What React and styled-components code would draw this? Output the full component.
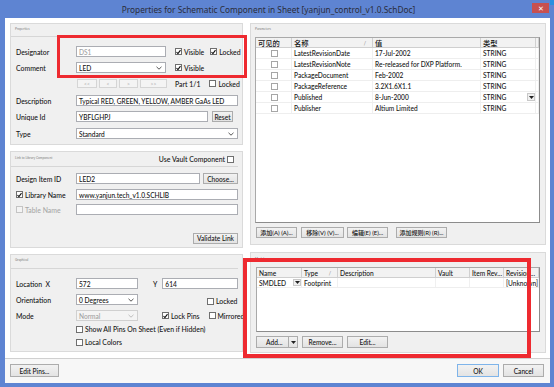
import React from "react";
import styled, { createGlobalStyle } from "styled-components";

const FONT = `Lato, "Noto Sans", "Noto Sans CJK SC", sans-serif`;

const Global = createGlobalStyle`
  html, body { margin: 0; padding: 0; }
  body {
    width: 554px; height: 387px; overflow: hidden;
    font-family: ${FONT};
    font-weight: 500;
    color: #141414;
  }
  * { box-sizing: border-box; }
`;

const Frame = styled.div`
  position: relative;
  width: 554px;
  height: 387px;
  background: #5e84d2;
  display: flex;
  flex-direction: column;
  padding: 0 4px 4px 5px;
`;

const TitleBar = styled.div`
  height: 18px;
  display: flex;
  align-items: center;
  justify-content: center;
  position: relative;
  font-family: "Noto Sans", sans-serif;
  font-weight: 400;
  font-size: 8.3px;
  color: #2a2d3a;
  padding-right: 18px;
`;

const CloseBtn = styled.div`
  position: absolute;
  right: 1px;
  top: 3px;
  width: 17px;
  height: 10px;
  background: #c75050;
  color: #fff;
  font-size: 7px;
  display: flex;
  align-items: center;
  justify-content: center;
`;

const CornerMark = styled.div`
  position: absolute;
  right: -4px;
  top: 0;
  width: 4px;
  height: 5px;
  background: #2a8fe0;
`;

const Client = styled.div`
  flex: 1;
  background: #fff;
  display: flex;
  flex-direction: column;
`;

const Main = styled.div`
  display: flex;
  gap: 7px;
  padding: 5px 7px 0 5px;
`;

const Column = styled.div`
  display: flex;
  flex-direction: column;
  gap: ${(p) => p.$gap}px;
  width: ${(p) => (p.$w ? `${p.$w}px` : "auto")};
  flex: ${(p) => (p.$w ? "none" : 1)};
`;

const Panel = styled.div`
  height: ${(p) => p.$h}px;
  background: #f0f0f0;
  border: 1px solid #dadada;
  display: flex;
  flex-direction: column;
`;

const PanelHead = styled.div`
  height: ${(p) => p.$h || 12}px;
  display: flex;
  align-items: center;
  justify-content: space-between;
  padding: 0 4px 0 4px;
  margin: 0 4px 0 0;
  border-bottom: ${(p) => (p.$line ? "1px solid #d6d6d6" : "none")};
`;

const Tiny = styled.span`
  font-size: 3.2px;
  color: #8a8a8a;
  align-self: flex-start;
  margin-top: ${(p) => p.$mt || 3}px;
`;

const Body = styled.div`
  padding: 0 4px 0 5px;
  display: flex;
  flex-direction: column;
`;

const Row = styled.div`
  display: flex;
  align-items: center;
  height: ${(p) => p.$h || 11}px;
  margin-top: ${(p) => p.$mt || 0}px;
`;

const Label = styled.div`
  width: ${(p) => p.$w || 60}px;
  flex: none;
  font-size: 6.9px;
  color: ${(p) => (p.$dim ? "#a8a8a8" : "#141414")};
  display: flex;
  align-items: center;
  white-space: nowrap;
`;

const Field = styled.div`
  width: ${(p) => p.$w}px;
  height: 11px;
  flex: none;
  margin-left: ${(p) => p.$ml || 0}px;
  border: 1px solid ${(p) => (p.$dis ? "#d0d0d0" : "#abadb3")};
  background: ${(p) => (p.$dis ? "#f4f4f4" : "#fff")};
  font-size: 6.6px;
  color: ${(p) => (p.$dim ? "#a0a0a0" : "#141414")};
  padding: 0 3px 0 2px;
  display: flex;
  align-items: center;
  justify-content: space-between;
  white-space: nowrap;
  overflow: hidden;
`;

const Chevron = ({ dim }) => (
  <svg width="6" height="4" viewBox="0 0 6 4">
    <polyline points="0.5,0.8 3,3.2 5.5,0.8" fill="none" stroke={dim ? "#b8b8b8" : "#444"} strokeWidth="0.9" />
  </svg>
);

const Btn = styled.div`
  width: ${(p) => p.$w}px;
  height: ${(p) => p.$h || 11}px;
  flex: none;
  margin-left: ${(p) => p.$ml || 0}px;
  border: 1px solid ${(p) => (p.$def ? "#7eb4ea" : p.$dis ? "#d5d5d5" : "#acacac")};
  background: ${(p) => (p.$dis ? "#f4f4f4" : "linear-gradient(#f2f2f2, #e3e3e3)")};
  color: ${(p) => (p.$dis ? "#b0b0b0" : "#141414")};
  font-size: ${(p) => p.$fs || 6.6}px;
  display: flex;
  align-items: center;
  justify-content: center;
  white-space: nowrap;
`;

const SplitBtn = styled(Btn)`
  justify-content: flex-start;
  padding-left: 9px;
  position: relative;
`;

const SplitPart = styled.div`
  position: absolute;
  right: 0;
  top: 0;
  bottom: 0;
  width: 9px;
  border-left: 1px solid #acacac;
  display: flex;
  align-items: center;
  justify-content: center;
`;

const Box = styled.span`
  width: 7px;
  height: 7px;
  flex: none;
  border: 1px solid ${(p) => (p.$dis ? "#c4c4c4" : p.$light ? "#a6a6a6" : "#6f6f6f")};
  background: ${(p) => (p.$dis ? "#f4f4f4" : "#fff")};
  display: inline-flex;
  align-items: center;
  justify-content: center;
`;

const CheckWrap = styled.div`
  display: flex;
  align-items: center;
  gap: 2px;
  margin-left: ${(p) => p.$ml || 0}px;
  font-size: 6.9px;
  color: ${(p) => (p.$dim ? "#a8a8a8" : "#141414")};
  white-space: nowrap;
  align-self: ${(p) => p.$self || "auto"};
`;

const Check = ({ checked, dis, children, ml, self, dim }) => (
  <CheckWrap $ml={ml} $self={self} $dim={dim}>
    <Box $dis={dis}>
      {checked && (
        <svg width="6" height="6" viewBox="0 0 6 6">
          <polyline points="0.6,3 2.3,4.9 5.4,0.7" fill="none" stroke="#111" strokeWidth="1.3" />
        </svg>
      )}
    </Box>
    {children}
  </CheckWrap>
);

const Text = styled.span`
  font-size: 6.9px;
  margin-left: ${(p) => p.$ml || 0}px;
  white-space: nowrap;
`;

const Spacer = styled.div`
  flex: 1;
`;

/* Tables */
const Table = styled.div`
  margin: ${(p) => p.$m};
  height: ${(p) => p.$h}px;
  background: #fff;
  border: 1px solid #a9a9a9;
  border-right-color: #8c8c8c;
  border-bottom-color: #8c8c8c;
  display: flex;
  flex-direction: column;
  overflow: hidden;
`;

const TRow = styled.div`
  display: grid;
  grid-template-columns: ${(p) => p.$cols};
  height: ${(p) => p.$h || 11}px;
  flex: none;
  background: ${(p) => (p.$head ? "#f2f2f2" : "#fff")};
  border-bottom: 1px solid ${(p) => (p.$head ? "#cfcfcf" : "#eeeeee")};
`;

const Cell = styled.div`
  font-size: ${(p) => p.$fs || 6.6}px;
  padding-left: 2px;
  display: flex;
  align-items: center;
  justify-content: ${(p) => p.$jc || "flex-start"};
  border-right: 1px solid ${(p) => (p.$head ? "#d0d0d0" : "#f0f0f0")};
  white-space: nowrap;
  overflow: hidden;
  position: relative;
`;

const SortMark = styled.span`
  position: absolute;
  right: 6px;
  font-size: 5px;
  color: #888;
`;

const DropBtn = styled.div`
  position: absolute;
  right: 0;
  top: 1px;
  bottom: 1px;
  width: 8px;
  background: #f0f0f0;
  border: 1px solid #c8c8c8;
  display: flex;
  align-items: center;
  justify-content: center;
`;

const Tri = () => (
  <svg width="5" height="3" viewBox="0 0 5 3">
    <polygon points="0,0 5,0 2.5,3" fill="#222" />
  </svg>
);

const BtnRow = styled.div`
  display: flex;
  align-items: center;
  margin: ${(p) => p.$m};
`;

const BottomBar = styled.div`
  margin-top: auto;
  height: 25px;
  border-top: 1px solid #d0d0d0;
  background: #f7f7f7;
  display: flex;
  align-items: flex-start;
  padding: 5px 6px 0 5px;
`;

const Annot = styled.div`
  position: absolute;
  left: ${(p) => p.$x}px;
  top: ${(p) => p.$y}px;
  width: ${(p) => p.$w}px;
  height: ${(p) => p.$h}px;
  border: ${(p) => p.$t}px solid #ee2a30;
  pointer-events: none;
`;

const paramCols = "36px 81px 108px 55px 1fr";
const params = [
  ["LatestRevisionDate", "17-Jul-2002", "STRING"],
  ["LatestRevisionNote", "Re-released for DXP Platform.", "STRING"],
  ["PackageDocument", "Feb-2002", "STRING"],
  ["PackageReference", "3.2X1.6X1.1", "STRING"],
  ["Published", "8-Jun-2000", "STRING", true],
  ["Publisher", "Altium Limited", "STRING"],
];

const modelCols = "45px 36px 98px 34px 34px 1fr";

export default function App() {
  return (
    <>
      <Global />
      <Frame>
        <TitleBar>
          Properties for Schematic Component in Sheet [yanjun_control_v1.0.SchDoc]
          <CloseBtn>✕</CloseBtn>
          <CornerMark />
        </TitleBar>
        <Client>
          <Main>
            <Column $w={233} $gap={6}>
              <Panel $h={122}>
                <PanelHead $h={13} $line>
                  <Tiny>Properties</Tiny>
                </PanelHead>
                <Body>
                  <Row $mt={9}>
                    <Label>Designator</Label>
                    <Field $w={90} $dim>DS1</Field>
                    <Check checked ml={9}>Visible</Check>
                    <Check checked ml={6}>Locked</Check>
                  </Row>
                  <Row $mt={5}>
                    <Label>Comment</Label>
                    <Field $w={90}>
                      LED
                      <Chevron />
                    </Field>
                    <Check checked ml={9}>Visible</Check>
                  </Row>
                  <Row $mt={6} $h={9}>
                    <Label />
                    <Btn $w={20} $h={9} $dis $fs={5} $ml={1}>&lt;&lt;</Btn>
                    <Btn $w={18} $h={9} $dis $fs={5} $ml={2}>&lt;</Btn>
                    <Btn $w={19} $h={9} $dis $fs={5} $ml={2}>&gt;</Btn>
                    <Btn $w={27} $h={9} $dis $fs={5} $ml={2}>&gt;&gt;</Btn>
                    <Text $ml={8}>Part 1/1</Text>
                    <Check ml={9}>Locked</Check>
                  </Row>
                  <Row $mt={7}>
                    <Label>Description</Label>
                    <Field $w={162}>Typical RED, GREEN, YELLOW, AMBER GaAs LED</Field>
                  </Row>
                  <Row $mt={5}>
                    <Label>Unique Id</Label>
                    <Field $w={132}>YBFLGHPJ</Field>
                    <Btn $w={21} $ml={4}>Reset</Btn>
                  </Row>
                  <Row $mt={6}>
                    <Label>Type</Label>
                    <Field $w={162}>
                      Standard
                      <Chevron />
                    </Field>
                  </Row>
                </Body>
              </Panel>

              <Panel $h={97}>
                <PanelHead $h={15} $line>
                  <Tiny $mt={4}>Link to Library Component</Tiny>
                  <CheckWrap>
                    Use Vault Component
                    <Box />
                  </CheckWrap>
                </PanelHead>
                <Body>
                  <Row $mt={6}>
                    <Label>Design Item ID</Label>
                    <Field $w={124}>LED2</Field>
                    <Btn $w={35} $ml={3}>Choose...</Btn>
                  </Row>
                  <Row $mt={5}>
                    <Label>
                      <Check checked>Library Name</Check>
                    </Label>
                    <Field $w={162}>www.yanjun.tech_v1.0.SCHLIB</Field>
                  </Row>
                  <Row $mt={4}>
                    <Label>
                      <Check dis dim>Table Name</Check>
                    </Label>
                    <Field $w={162} />
                  </Row>
                  <Row $mt={18} $h={10}>
                    <Spacer />
                    <Btn $w={45} $h={11}>Validate Link</Btn>
                  </Row>
                </Body>
              </Panel>

              <Panel $h={98}>
                <PanelHead $h={14} $line>
                  <Tiny>Graphical</Tiny>
                </PanelHead>
                <Body>
                  <Row $mt={9}>
                    <Label>Location&nbsp;&nbsp;X</Label>
                    <Field $w={62}>572</Field>
                    <Text $ml={15}>Y</Text>
                    <Field $w={76} $ml={5}>614</Field>
                  </Row>
                  <Row $mt={5}>
                    <Label>Orientation</Label>
                    <Field $w={62}>
                      0 Degrees
                      <Chevron />
                    </Field>
                    <Check ml={69} self="flex-end">Locked</Check>
                  </Row>
                  <Row $mt={5}>
                    <Label>Mode</Label>
                    <Field $w={62} $dis $dim>
                      Normal
                      <Chevron dim />
                    </Field>
                    <Check checked ml={24}>Lock Pins</Check>
                    <Check ml={9}>Mirrored</Check>
                  </Row>
                  <Row $mt={3} $h={10}>
                    <Label />
                    <Check>Show All Pins On Sheet (Even if Hidden)</Check>
                  </Row>
                  <Row $mt={3} $h={10}>
                    <Label />
                    <Check>Local Colors</Check>
                  </Row>
                </Body>
              </Panel>
            </Column>

            <Column $gap={7}>
              <Panel $h={222}>
                <PanelHead $h={13}>
                  <Tiny>Parameters</Tiny>
                </PanelHead>
                <Table $m="0 5px 0 4px" $h={186}>
                  <TRow $head $cols={paramCols} $h={10}>
                    <Cell $head $fs={7.3}>可见的</Cell>
                    <Cell $head $fs={7.3}>
                      名称<SortMark>/</SortMark>
                    </Cell>
                    <Cell $head $fs={7.3}>值</Cell>
                    <Cell $head $fs={7.3}>类型</Cell>
                    <Cell $head />
                  </TRow>
                  {params.map(([n, v, t, drop]) => (
                    <TRow key={n} $cols={paramCols}>
                      <Cell $jc="center">
                        <Box $light />
                      </Cell>
                      <Cell>{n}</Cell>
                      <Cell>{v}</Cell>
                      <Cell>
                        {t}
                        {drop && (
                          <DropBtn>
                            <Tri />
                          </DropBtn>
                        )}
                      </Cell>
                      <Cell />
                    </TRow>
                  ))}
                </Table>
                <BtnRow $m="4px 0 0 5px">
                  <Btn $w={41} $fs={6}>添加(A) (A)...</Btn>
                  <Btn $w={43} $fs={6} $ml={4}>移除(V) (V)...</Btn>
                  <Btn $w={41} $fs={6} $ml={3}>编辑(E) (E)...</Btn>
                  <Btn $w={51} $fs={6} $ml={8}>添加规则(R) (R)...</Btn>
                </BtnRow>
              </Panel>

              <Panel $h={101}>
                <PanelHead $h={14}>
                  <Tiny $mt={4}>Models</Tiny>
                </PanelHead>
                <Table $m="0 5px 0 5px" $h={65}>
                  <TRow $head $cols={modelCols} $h={10}>
                    <Cell $head>Name</Cell>
                    <Cell $head>
                      Type<SortMark>/</SortMark>
                    </Cell>
                    <Cell $head>Description</Cell>
                    <Cell $head>Vault</Cell>
                    <Cell $head>Item Rev...</Cell>
                    <Cell $head>Revision...</Cell>
                  </TRow>
                  <TRow $cols={modelCols} $h={10}>
                    <Cell>
                      SMDLED
                      <DropBtn>
                        <Tri />
                      </DropBtn>
                    </Cell>
                    <Cell>Footprint</Cell>
                    <Cell />
                    <Cell />
                    <Cell />
                    <Cell>[Unknown]</Cell>
                  </TRow>
                </Table>
                <BtnRow $m="4px 0 0 5px">
                  <SplitBtn $w={42} $h={12}>
                    Add...
                    <SplitPart>
                      <Tri />
                    </SplitPart>
                  </SplitBtn>
                  <Btn $w={41} $h={12} $ml={4}>Remove...</Btn>
                  <Btn $w={41} $h={12} $ml={4}>Edit...</Btn>
                </BtnRow>
              </Panel>
            </Column>
          </Main>

          <BottomBar>
            <Btn $w={49} $h={13}>Edit Pins...</Btn>
            <Spacer />
            <Btn $w={42} $h={13} $def>OK</Btn>
            <Btn $w={41} $h={13} $ml={4}>Cancel</Btn>
          </BottomBar>
        </Client>
        <Annot $x={57} $y={35} $w={190} $h={43} $t={3} />
        <Annot $x={243} $y={258} $w={288} $h={100} $t={4} />
      </Frame>
    </>
  );
}
